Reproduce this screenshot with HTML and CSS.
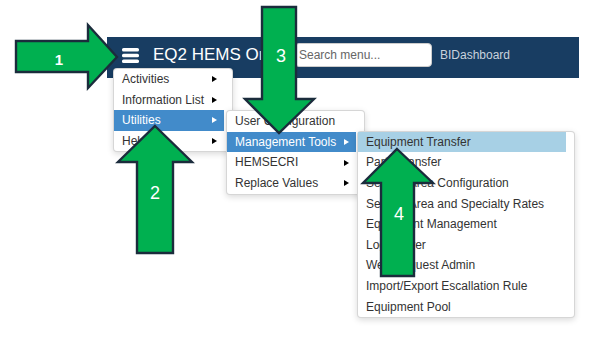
FILE: index.html
```html
<!DOCTYPE html>
<html lang="en">
<head>
    <meta charset="UTF-8">
    <meta name="viewport" content="width=device-width, initial-scale=1.0">
    <title>EQ2 HEMS Online</title>
    <link rel="stylesheet" href="styles.css">
</head>
<body>
    <div class="screen">
        <div class="navbar">
            <svg class="menu-toggle" width="17" height="15" viewBox="0 0 17 15">
                <rect x="0" y="0" width="17" height="3.6" rx="1.6" fill="#fff"/>
                <rect x="0" y="5.7" width="17" height="3.6" rx="1.6" fill="#fff"/>
                <rect x="0" y="11.4" width="17" height="3.6" rx="1.6" fill="#fff"/>
            </svg>
            <div class="brand">EQ2 HEMS Online</div>
            <input class="search" type="text" placeholder="Search menu...">
            <a class="nav-link">BIDashboard</a>

            <!-- dropdown menu -->
            <ul class="menu menu-main">
                <li class="menu-item"><span>Activities</span><i class="caret"></i></li>
                <li class="menu-item"><span>Information List</span><i class="caret"></i></li>
                <li class="menu-item active"><span>Utilities</span><i class="caret"></i>
                    <ul class="menu menu-sub menu-utilities">
                        <li class="menu-item"><span>User Configuration</span></li>
                        <li class="menu-item active"><span>Management Tools</span><i class="caret"></i>
                            <ul class="menu menu-sub menu-tools">
                                <li class="menu-item hover"><span>Equipment Transfer</span></li>
                                <li class="menu-item"><span>Parts Transfer</span></li>
                                <li class="menu-item"><span>Service Area Configuration</span></li>
                                <li class="menu-item"><span>Service Area and Specialty Rates</span></li>
                                <li class="menu-item"><span>Equipment Management</span></li>
                                <li class="menu-item"><span>Log Viewer</span></li>
                                <li class="menu-item"><span>Web Request Admin</span></li>
                                <li class="menu-item"><span>Import/Export Escallation Rule</span></li>
                                <li class="menu-item"><span>Equipment Pool</span></li>
                            </ul>
                        </li>
                        <li class="menu-item"><span>HEMSECRI</span><i class="caret"></i></li>
                        <li class="menu-item"><span>Replace Values</span><i class="caret"></i></li>
                    </ul>
                </li>
                <li class="menu-item"><span>Help</span><i class="caret"></i></li>
            </ul>
        </div>

        <!-- numbered callout arrows drawn over the screenshot -->
        <svg class="callouts" width="605" height="340" viewBox="0 0 605 340">
            <g fill="#00b050" stroke="#1b2c3c" stroke-width="2.4" stroke-linejoin="miter">
                <polygon points="16,41 88,41 88,25 117,57 88,88 88,72 16,72"/>
                <polygon points="262,7 296,7 296,99 314,99 279,133 245,99 262,99"/>
                <polygon points="155,126 192,162 173,162 173,253 137,253 137,162 118,162"/>
                <polygon points="397,149 433,183 414,183 414,276 381,276 381,183 363,183"/>
            </g>
            <g fill="#fff" font-family="Liberation Sans, Arial, sans-serif" text-anchor="middle">
                <text x="59" y="65" font-size="15" font-weight="bold">1</text>
                <text x="281" y="62" font-size="18">3</text>
                <text x="155" y="199" font-size="18">2</text>
                <text x="399" y="220" font-size="18">4</text>
            </g>
        </svg>
    </div>
</body>
</html>
```

FILE: styles.css
```css
*{
    box-sizing: border-box;
}

body{
    margin: 0;
    background: #fff;
    font-family: "Liberation Sans", Arial, sans-serif;
    color: #333;
}

.screen{
    position: relative;
    width: 605px;
    height: 340px;
    padding: 37px 0 0 107px;
    overflow: hidden;
}

.navbar{
    position: relative;
    width: 472px;
    height: 41px;
    padding-bottom: 5px;
    display: flex;
    align-items: center;
    background: #183d62;
}
.menu-toggle{
    flex: none;
    margin-left: 15px;
}
.brand{
    width: 142px;
    margin-left: 14px;
    color: #fff;
    font-size: 17px;
    white-space: nowrap;
    overflow: hidden;
}
.search{
    width: 137px;
    height: 24px;
    margin: 0;
    padding: 0 3px;
    border: 1px solid #ccc;
    border-radius: 4px;
    font-family: inherit;
    font-size: 12px;
    color: #333;
    background: #fff;
}
.search::placeholder{
    color: #666;
}
.nav-link{
    margin-left: 8px;
    color: #c8d2dd;
    font-size: 12px;
}

/* dropdown menus */
.menu{
    position: absolute;
    margin: 0;
    padding: 0 8px 0 0;
    list-style: none;
    background: #fff;
    border: 1px solid rgba(0,0,0,0.16);
    border-radius: 4px;
    box-shadow: 0 2px 6px rgba(0,0,0,0.15);
    font-size: 12px;
}
.menu-main{
    left: 6px;
    top: 31px;
    width: 120px;
    z-index: 5;
}
.menu-sub{
    z-index: 10;
}
.menu-utilities{
    left: 112px;
    top: 0;
    width: 139px;
}
.menu-tools{
    left: 130px;
    top: -1px;
    width: 218px;
}
.menu-item{
    position: relative;
    height: 20.6px;
    line-height: 20.6px;
    padding: 0 7px 0 8px;
    display: flex;
    align-items: center;
    justify-content: space-between;
    white-space: nowrap;
    color: #333;
}
.menu-item.active{
    background: #428bca;
    color: #fff;
}
.menu-item.hover{
    background: #a7d0e5;
}
.caret{
    width: 0;
    height: 0;
    border-left: 5px solid #000;
    border-top: 3.5px solid transparent;
    border-bottom: 3.5px solid transparent;
}
.menu-item.active > .caret{
    border-left-color: #fff;
}

.callouts{
    position: absolute;
    left: 0;
    top: 0;
    z-index: 100;
    pointer-events: none;
}
```
